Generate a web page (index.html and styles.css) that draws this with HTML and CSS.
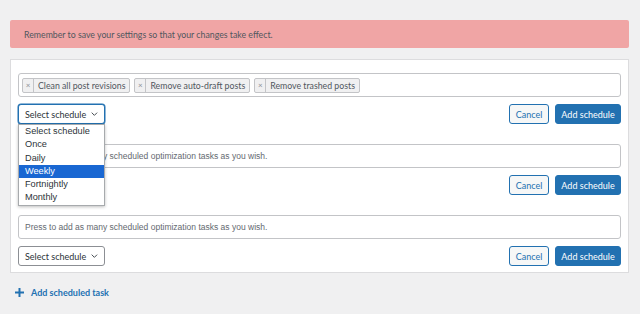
FILE: index.html
```html
<!DOCTYPE html>
<html>
<head>
<meta charset="utf-8">
<link rel="stylesheet" href="styles.css">
</head>
<body>
<div class="notice">Remember to save your settings so that your changes take effect.</div>
<div class="panel">
  <div class="task">
    <div class="tagbox">
      <span class="tag"><span class="tag-x">×</span><span class="tag-text">Clean all post revisions</span></span>
      <span class="tag"><span class="tag-x">×</span><span class="tag-text">Remove auto-draft posts</span></span>
      <span class="tag"><span class="tag-x">×</span><span class="tag-text">Remove trashed posts</span></span>
    </div>
    <div class="row">
      <div class="select-wrap">
        <div class="select focused">Select schedule <svg class="chev" viewBox="0 0 10 6" width="9" height="6"><path d="M1 1l4 4 4-4" fill="none" stroke="#3c434a" stroke-width="1.4"/></svg></div>
        <ul class="dropdown">
          <li>Select schedule</li>
          <li>Once</li>
          <li>Daily</li>
          <li class="active">Weekly</li>
          <li>Fortnightly</li>
          <li>Monthly</li>
        </ul>
      </div>
      <div class="actions">
        <button class="btn btn-secondary">Cancel</button>
        <button class="btn btn-primary">Add schedule</button>
      </div>
    </div>
  </div>
  <div class="task">
    <div class="tagbox placeholder">Press to add as many scheduled optimization tasks as you wish.</div>
    <div class="row">
      <div class="select">Select schedule <svg class="chev" viewBox="0 0 10 6" width="9" height="6"><path d="M1 1l4 4 4-4" fill="none" stroke="#3c434a" stroke-width="1.4"/></svg></div>
      <div class="actions">
        <button class="btn btn-secondary">Cancel</button>
        <button class="btn btn-primary">Add schedule</button>
      </div>
    </div>
  </div>
  <div class="task">
    <div class="tagbox placeholder">Press to add as many scheduled optimization tasks as you wish.</div>
    <div class="row">
      <div class="select">Select schedule <svg class="chev" viewBox="0 0 10 6" width="9" height="6"><path d="M1 1l4 4 4-4" fill="none" stroke="#3c434a" stroke-width="1.4"/></svg></div>
      <div class="actions">
        <button class="btn btn-secondary">Cancel</button>
        <button class="btn btn-primary">Add schedule</button>
      </div>
    </div>
  </div>
</div>
<a class="add-task"><svg viewBox="0 0 10 10" width="9" height="9"><path d="M5 0v10M0 5h10" stroke="#2271b1" stroke-width="2.2"/></svg><span>Add scheduled task</span></a>
</body>
</html>
```
FILE: styles.css
```css
* { box-sizing: border-box; }
html, body { margin: 0; }
body {
  background: #f0f0f1;
  padding: 20px 11px 0 10px;
  font-family: Lato, "Noto Sans", sans-serif;
  font-size: 8.75px;
  color: #3c434a;
  white-space: nowrap;
}
.notice {
  height: 28px;
  background: #f0a5a5;
  border-radius: 2px;
  padding: 0 14px;
  display: flex;
  align-items: center;
  color: #50575e;
}
.panel {
  margin-top: 11px;
  background: #fff;
  border: 1px solid #dcdcde;
  padding: 13px 7px 6px;
}
.task + .task { margin-top: 20px; }
.tagbox {
  height: 24px;
  border: 1px solid #c3c4c7;
  border-radius: 3px;
  display: flex;
  align-items: center;
  gap: 4px;
  padding: 0 3px;
}
.tag {
  display: flex;
  align-items: center;
  height: 15px;
  background: #f0f0f1;
  border: 1px solid #c3c4c7;
  border-radius: 2px;
  color: #50575e;
}
.tag-x {
  width: 11px;
  text-align: center;
  border-right: 1px solid #c3c4c7;
  color: #8c8f94;
  font-size: 8px;
  line-height: 13px;
}
.tag-text { padding: 0 4px 0 4px; }
.placeholder {
  font-family: "Liberation Sans", Arial, sans-serif;
  font-size: 8.5px;
  color: #646970;
  padding: 0 6px;
}
.row {
  margin-top: 7px;
  display: flex;
  justify-content: space-between;
  align-items: flex-start;
}
.select-wrap { position: relative; }
.select {
  width: 87px;
  height: 20px;
  border: 1px solid #8c8f94;
  border-radius: 3px;
  display: flex;
  align-items: center;
  padding: 0 6px;
  gap: 4px;
  background: #fff;
  color: #2c3338;
  font-size: 9px;
}
.select.focused { border-color: #2271b1; box-shadow: 0 0 0 0.5px #2271b1; }
.chev { margin-left: 1px; }
.dropdown {
  position: absolute;
  left: 0;
  top: 20px;
  width: 87px;
  margin: 0;
  padding: 0;
  list-style: none;
  background: #fff;
  border: 1px solid #a7aaad;
  box-shadow: 0 1px 3px rgba(0,0,0,0.25);
  font-family: "Liberation Sans", Arial, sans-serif;
  font-size: 9.2px;
  color: #2c3338;
  z-index: 2;
}
.dropdown li { height: 13.3px; line-height: 13.3px; padding: 0 6px; }
.dropdown li.active { background: #1967d2; color: #fff; }
.actions { display: flex; gap: 6px; }
.btn {
  height: 20px;
  border-radius: 3px;
  font-family: inherit;
  font-size: 9px;
  padding: 0;
  cursor: pointer;
  white-space: nowrap;
}
.btn-secondary {
  background: #f6f7f7;
  border: 1px solid #2271b1;
  color: #2271b1;
  width: 40px;
}
.btn-primary {
  background: #2271b1;
  border: 1px solid #2271b1;
  color: #fff;
  width: 66px;
}
.add-task {
  display: flex;
  align-items: center;
  gap: 7px;
  margin-top: 14px;
  padding-left: 5px;
  color: #2271b1;
  font-weight: 700;
  font-size: 9px;
}
```
